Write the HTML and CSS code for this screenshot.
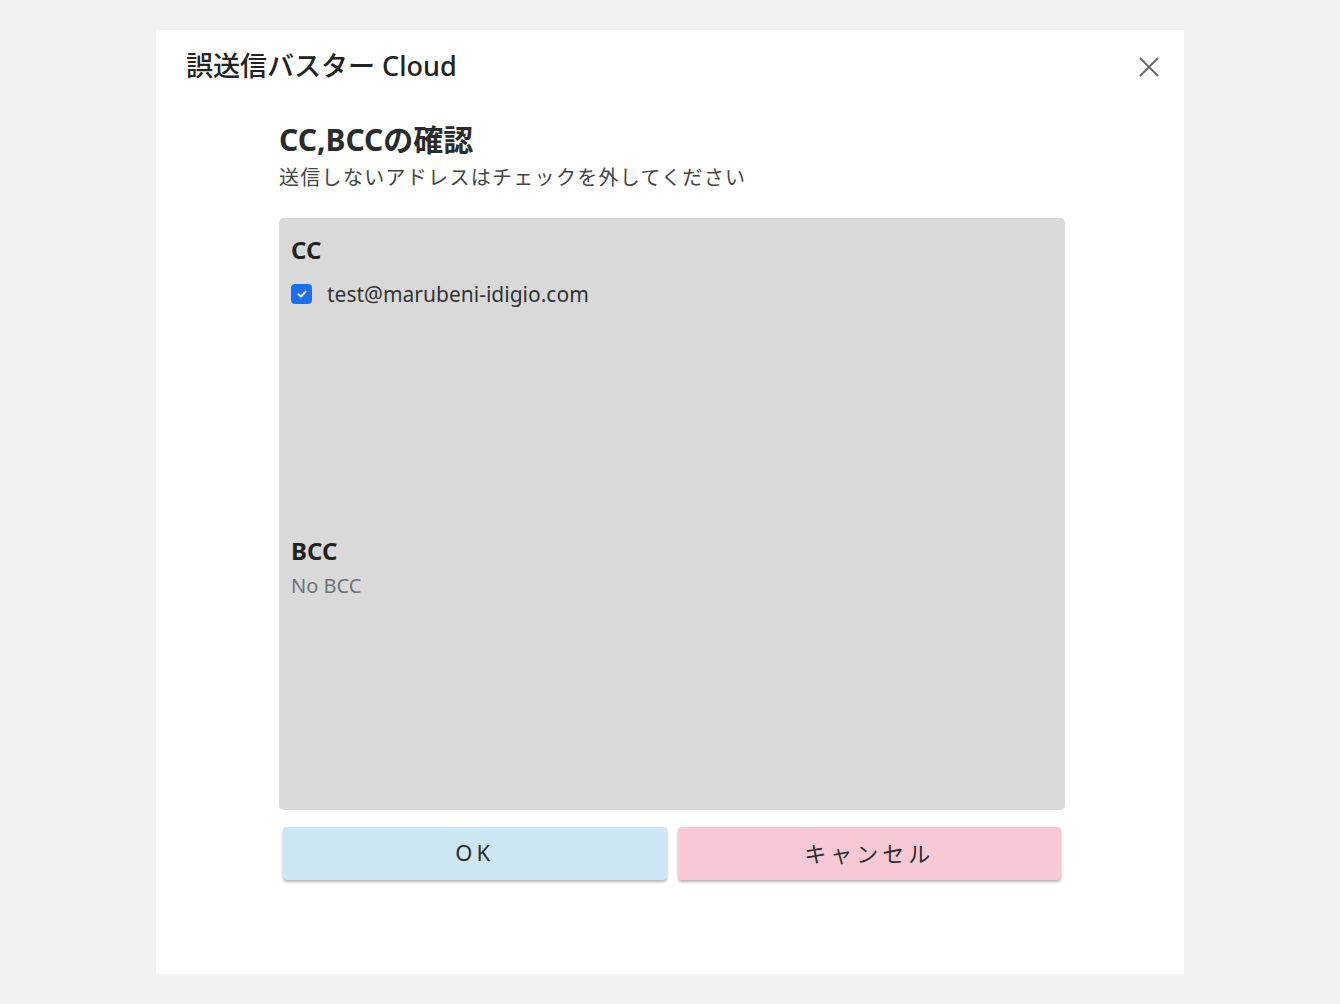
FILE: index.html
```html
<!DOCTYPE html>
<html lang="ja">

<head>
    <meta charset="UTF-8">
    <meta name="viewport" content="width=device-width, initial-scale=1.0">
    <title>誤送信バスター Cloud</title>
    <link rel="stylesheet" href="styles.css">
</head>

<body>
    <div class="dialog">
        <div class="header">
            <h1 class="title">誤送信バスター Cloud</h1>
            <div class="closeBtn">
                <svg width="20" height="20" viewBox="0 0 20 20">
                    <path d="M1 1L19 19M19 1L1 19" stroke="#6b6b6b" stroke-width="2" fill="none"/>
                </svg>
            </div>
        </div>

        <div class="content">
            <h2 class="heading">CC,BCCの確認</h2>
            <p class="sub">送信しないアドレスはチェックを外してください</p>

            <div class="listBox">
                <div class="section">
                    <div class="label">CC</div>
                    <label class="row">
                        <span class="check">
                            <svg width="12" height="12" viewBox="0 0 12 12">
                                <path d="M2.5 6.2L5 8.6L9.6 3.6" stroke="#fff" stroke-width="2" fill="none" stroke-linecap="round" stroke-linejoin="round"/>
                            </svg>
                        </span>
                        <span class="addr">test@marubeni-idigio.com</span>
                    </label>
                </div>
                <div class="section">
                    <div class="label">BCC</div>
                    <div class="empty">No BCC</div>
                </div>
            </div>

            <div class="btns">
                <div class="btn okBtn">OK</div>
                <div class="btn cancelBtn">キャンセル</div>
            </div>
        </div>
    </div>
</body>

</html>
```

FILE: styles.css
```css
* {
    margin: 0px;
    padding: 0px;
    box-sizing: border-box;
}

body {
    background-color: #f2f2f2;
    font-family: "Noto Sans", "Noto Sans CJK JP", sans-serif;
    color: #2b2b2b;
}

.dialog {
    width: 1028px;
    height: 944px;
    margin: 30px auto 0;
    background-color: #fff;
    padding-top: 16px;
}

.header {
    display: flex;
    align-items: center;
    justify-content: space-between;
    padding: 0 23px 0 30px;
    height: 40px;
}

.title {
    font-size: 27px;
    font-weight: 500;
    line-height: 40px;
    color: #222;
}

.closeBtn {
    width: 24px;
    height: 24px;
    display: flex;
    align-items: center;
    justify-content: center;
    margin-top: 2px;
}

.content {
    width: 786px;
    margin: 36px 0 0 123px;
}

.heading {
    font-size: 30px;
    font-weight: 700;
    line-height: 36px;
    color: #2b2b2b;
}

.sub {
    margin-top: 6px;
    font-size: 20px;
    line-height: 28px;
    letter-spacing: 1.3px;
    color: #444;
}

.listBox {
    margin-top: 26px;
    height: 592px;
    background-color: #d9d9d9;
    border-radius: 5px;
    padding: 16px 12px;
}

.section {
    min-height: 301px;
}

.label {
    font-size: 24px;
    font-weight: 700;
    line-height: 32px;
    color: #222;
}

.row {
    display: flex;
    align-items: center;
    margin-top: 14px;
    height: 28px;
}

.check {
    width: 21px;
    height: 20px;
    border-radius: 4px;
    background-color: #1a6ff0;
    display: flex;
    align-items: center;
    justify-content: center;
}

.addr {
    margin-left: 15px;
    font-size: 21px;
    line-height: 28px;
    color: #333;
}

.empty {
    margin-top: 5px;
    font-size: 20px;
    line-height: 28px;
    color: #6e737a;
}

.btns {
    display: flex;
    gap: 11px;
    margin-top: 17px;
    padding: 0 4px;
}

.btn {
    flex: 1;
    height: 53px;
    padding-bottom: 3px;
    border-radius: 4px;
    display: flex;
    align-items: center;
    justify-content: center;
    font-size: 22px;
    letter-spacing: 4px;
    color: #2b2b2b;
    box-shadow: 0 2px 3px rgba(0, 0, 0, 0.3);
}

.okBtn {
    background-color: #cde6f4;
}

.cancelBtn {
    background-color: #f8c9d4;
}
```
